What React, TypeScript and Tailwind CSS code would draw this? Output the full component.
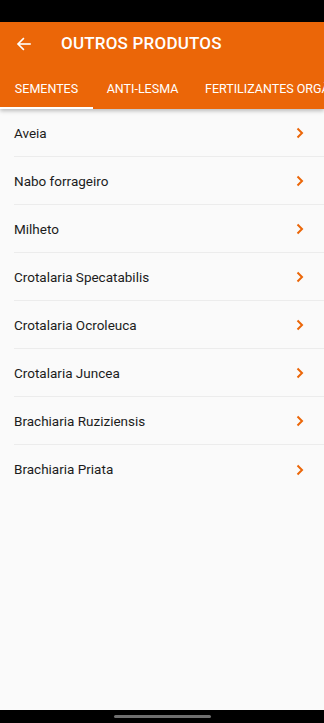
import React from "react";

const items = [
  "Aveia",
  "Nabo forrageiro",
  "Milheto",
  "Crotalaria Specatabilis",
  "Crotalaria Ocroleuca",
  "Crotalaria Juncea",
  "Brachiaria Ruziziensis",
  "Brachiaria Priata",
];

export default function App() {
  return (
    <div className="w-[324px] h-[723px] flex flex-col bg-[#fafafa] overflow-hidden" style={{ fontFamily: "Roboto, 'Noto Sans', sans-serif" }}>
      <div className="h-[22px] bg-black shrink-0" />
      <div className="bg-[#eb6608] shrink-0 relative z-10 shadow-[0_2px_4px_rgba(0,0,0,0.25)]">
        <div className="h-[44px] flex items-center">
          <div className="w-[61px] pl-[16px] flex items-center">
            <svg width="16" height="16" viewBox="0 0 24 24" fill="none" stroke="white" strokeWidth="2.4" strokeLinecap="square">
              <path d="M21 12H4" />
              <path d="M11 4l-8 8 8 8" />
            </svg>
          </div>
          <span className="text-white text-[17px] font-medium tracking-[0.2px]">OUTROS PRODUTOS</span>
        </div>
        <div className="h-[43px] flex items-stretch whitespace-nowrap overflow-hidden">
          <div className="relative w-[93px] shrink-0 flex items-center justify-center pt-[3px] text-white text-[12.5px]">
            SEMENTES
            <div className="absolute left-0 right-0 bottom-0 h-[2px] bg-white" />
          </div>
          <div className="w-[99px] shrink-0 flex items-center justify-center pt-[3px] text-white text-[12.5px]">ANTI-LESMA</div>
          <div className="shrink-0 flex items-center pl-[13px] pt-[3px] text-white text-[12.5px]">FERTILIZANTES ORGÂNICOS</div>
        </div>
      </div>
      <div className="flex-1 flex flex-col">
        {items.map((t, i) => (
          <div key={t} className="h-[48px] flex items-stretch">
            <div className={"flex-1 flex items-center ml-[14px] pr-[20px] pt-[1px] " + (i < items.length - 1 ? "border-b border-[#ececec]" : "")}>
              <span className="flex-1 text-[13.5px] text-[#1c1c1c]">{t}</span>
              <svg width="8" height="12" viewBox="0 0 8 12" fill="none" stroke="#eb6608" strokeWidth="2">
                <path d="M1.5 1.5L6 6l-4.5 4.5" />
              </svg>
            </div>
          </div>
        ))}
      </div>
      <div className="h-[13px] bg-black shrink-0 flex items-center justify-center">
        <div className="w-[97px] h-[3px] rounded-full bg-[#6f6f6f]" />
      </div>
    </div>
  );
}
